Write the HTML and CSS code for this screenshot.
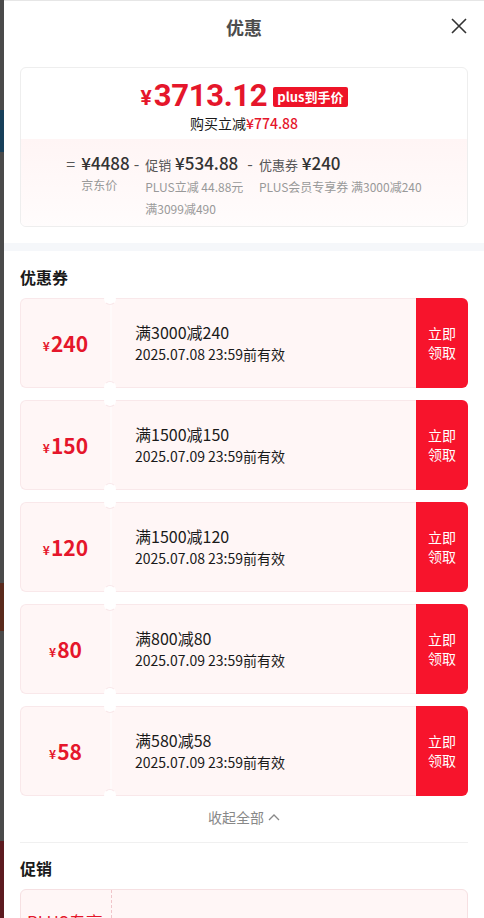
FILE: index.html
```html
<!DOCTYPE html>
<html lang="zh-CN">
<head>
    <meta charset="UTF-8">
    <meta name="viewport" content="width=device-width, initial-scale=1.0">
    <title>优惠</title>
    <link rel="stylesheet" href="styles.css">
</head>
<body>
<div class="page">
    <div class="behind">
        <div class="b-gray b1"></div>
        <div class="b-blue"></div>
        <div class="b-gray b2"></div>
        <div class="b-brown"></div>
        <div class="b-gray b3"></div>
        <div class="b-red"></div>
    </div>
    <div class="panel">
        <header class="head">
            <h1>优惠</h1>
            <span class="close">
                <svg width="16" height="16" viewBox="0 0 16 16"><path d="M1 1L15 15M15 1L1 15" stroke="#333" stroke-width="1.6" fill="none"/></svg>
            </span>
        </header>

        <div class="sum-wrap">
            <div class="sum">
                <div class="sum-top">
                    <div class="final">
                        <span class="yen">¥</span><span class="big">3713.12</span>
                        <span class="tag">plus到手价</span>
                    </div>
                    <div class="cut">购买立减<em>¥774.88</em></div>
                </div>
                <div class="sum-bot">
                    <div class="col">
                        <span class="op">=</span>
                        <div class="val">
                            <p class="amt">¥4488</p>
                            <p class="sub">京东价</p>
                        </div>
                    </div>
                    <div class="col">
                        <span class="op">-</span>
                        <div class="val">
                            <p class="amt"><i>促销</i> ¥534.88</p>
                            <p class="sub">PLUS立减 44.88元</p>
                            <p class="sub">满3099减490</p>
                        </div>
                    </div>
                    <div class="col">
                        <span class="op">-</span>
                        <div class="val">
                            <p class="amt"><i>优惠券</i> ¥240</p>
                            <p class="sub">PLUS会员专享券 满3000减240</p>
                        </div>
                    </div>
                </div>
            </div>
        </div>

        <div class="band"></div>

        <section class="block">
            <h2>优惠券</h2>
            <ul class="coupons">
                <li class="coupon">
                    <div class="c-main">
                        <div class="c-left"><span>¥</span>240</div>
                        <div class="c-info">
                            <p class="c-rule">满3000减240</p>
                            <p class="c-date">2025.07.08 23:59前有效</p>
                        </div>
                    </div>
                    <div class="c-btn">立即<br>领取</div>
                </li>
                <li class="coupon">
                    <div class="c-main">
                        <div class="c-left"><span>¥</span>150</div>
                        <div class="c-info">
                            <p class="c-rule">满1500减150</p>
                            <p class="c-date">2025.07.09 23:59前有效</p>
                        </div>
                    </div>
                    <div class="c-btn">立即<br>领取</div>
                </li>
                <li class="coupon">
                    <div class="c-main">
                        <div class="c-left"><span>¥</span>120</div>
                        <div class="c-info">
                            <p class="c-rule">满1500减120</p>
                            <p class="c-date">2025.07.08 23:59前有效</p>
                        </div>
                    </div>
                    <div class="c-btn">立即<br>领取</div>
                </li>
                <li class="coupon">
                    <div class="c-main">
                        <div class="c-left"><span>¥</span>80</div>
                        <div class="c-info">
                            <p class="c-rule">满800减80</p>
                            <p class="c-date">2025.07.09 23:59前有效</p>
                        </div>
                    </div>
                    <div class="c-btn">立即<br>领取</div>
                </li>
                <li class="coupon">
                    <div class="c-main">
                        <div class="c-left"><span>¥</span>58</div>
                        <div class="c-info">
                            <p class="c-rule">满580减58</p>
                            <p class="c-date">2025.07.09 23:59前有效</p>
                        </div>
                    </div>
                    <div class="c-btn">立即<br>领取</div>
                </li>
            </ul>
            <div class="fold">收起全部
                <svg width="12" height="8" viewBox="0 0 12 8"><path d="M1 7L6 2L11 7" stroke="#888" stroke-width="1.3" fill="none"/></svg>
            </div>
        </section>

        <section class="block promo-block">
            <h2>促销</h2>
            <div class="promo">
                <div class="p-left">PLUS专享</div>
                <div class="p-info"></div>
            </div>
        </section>
    </div>
</div>
</body>
</html>
```

FILE: styles.css
```css
*{margin: 0;padding: 0;list-style: none;box-sizing: border-box;}
html,body{height: 100%;overflow: hidden;}
body{font-family: "Noto Sans CJK SC", "Noto Sans", sans-serif;color: #1a1a1a;background: #fff;}
.page{display: flex;height: 918px;}

/* page behind the drawer */
.behind{width: 4px;display: flex;flex-direction: column;}
.b-gray{background: #4a4a4a;}
.b1{height: 110px;}
.b2{height: 431px;}
.b3{height: 210px;}
.b-blue{height: 42px;background: #17405a;}
.b-brown{height: 48px;background: #5a2a1c;}
.b-red{flex: 1;background: #5c1a1f;}

.panel{flex: 1;background: #fff;border-top: 1px solid #e6e6e6;overflow: hidden;}

.head{height: 51px;display: flex;align-items: center;justify-content: center;position: relative;}
.head h1{font-size: 18px;font-weight: bold;color: #4d4d4d;}
.close{position: absolute;right: 17px;top: 17px;width: 16px;height: 16px;display: flex;}

.sum-wrap{padding: 15px 16px 16px;}
.sum{border: 1px solid #eeeeee;border-radius: 6px;overflow: hidden;height: 160px;display: flex;flex-direction: column;}
.sum-top{height: 71px;display: flex;flex-direction: column;align-items: center;padding-top: 13px;}
.final{display: flex;align-items: center;color: #e5162b;height: 30px;line-height: 30px;font-family: Roboto, "Noto Sans CJK SC", sans-serif;}
.final .yen{font-size: 21px;font-weight: bold;margin-top: 4px;margin-right: 2px;}
.final .big{font-size: 31px;font-weight: bold;letter-spacing: -0.3px;}
.tag{margin-left: 6px;margin-top: 2px;background: #ee1428;color: #fff;font-family: "Noto Sans CJK SC", sans-serif;font-size: 13px;font-weight: bold;height: 20px;line-height: 20px;padding: 0 4px;border-radius: 2px;}
.cut{font-size: 14px;line-height: 20px;color: #1a1a1a;margin-top: 2px;}
.cut em{font-style: normal;color: #e5162b;font-weight: 500;}

.sum-bot{flex: 1;background: linear-gradient(180deg, #fff5f5, #fffcfc);display: flex;justify-content: center;padding-top: 13px;gap: 4px;}
.col{display: flex;gap: 6px;}
.op{font-size: 16px;color: #555;line-height: 22px;}
.amt{font-size: 17px;font-weight: 500;color: #333;line-height: 22px;white-space: nowrap;}
.amt i{font-style: normal;font-size: 13px;font-weight: normal;color: #555;}
.sub{font-size: 12px;color: #999;line-height: 22px;white-space: nowrap;}

.band{height: 8px;background: #f5f7fa;}

.block{padding: 0 16px;}
.block h2{font-size: 16px;font-weight: bold;line-height: 24px;padding-top: 14px;}
.coupons{margin-top: 9px;display: flex;flex-direction: column;gap: 12px;}
.coupon{height: 90px;display: flex;}
.c-main{flex: 1;display: flex;background: #fff6f6;border: 1px solid #f9e8ea;border-right: 0;border-radius: 6px 0 0 6px;}
.c-left{width: 91px;position: relative;display: flex;align-items: center;justify-content: center;color: #e5162b;font-size: 21px;font-weight: bold;border-right: 2px solid #fffafa;}
.c-left span{font-size: 12px;margin-top: 4px;margin-right: 1px;}
.c-left::before,.c-left::after{content: "";position: absolute;right: -6px;width: 10px;height: 10px;border-radius: 50%;background: #fff;border: 1px solid transparent;}
.c-left::before{top: -6px;border-bottom-color: #f9e8ea;}
.c-left::after{bottom: -6px;border-top-color: #f9e8ea;}
.c-info{flex: 1;display: flex;flex-direction: column;justify-content: center;padding-left: 23px;color: #1a1a1a;}
.c-rule{font-size: 16px;line-height: 22px;}
.c-date{font-size: 14px;line-height: 22px;}
.c-btn{width: 52px;background: #f7142c;color: #fff;font-size: 14px;line-height: 19px;display: flex;align-items: center;justify-content: center;text-align: center;border-radius: 0 6px 6px 0;}

.fold{margin-top: 11px;height: 20px;display: flex;align-items: center;justify-content: center;gap: 4px;font-size: 14px;color: #888;}
.promo-block{margin-top: 15px;}
.promo-block h2{border-top: 1px solid #f0f0f0;padding-top: 13px;}
.promo{margin-top: 9px;height: 80px;display: flex;background: #fff6f6;border: 1px solid #f6e0e2;border-radius: 6px;}
.p-left{width: 91px;border-right: 1px dashed #f0c5ca;color: #e5162b;font-size: 17px;line-height: 24px;padding: 20px 0 0 6px;white-space: nowrap;overflow: hidden;}
.p-info{flex: 1;}
```
